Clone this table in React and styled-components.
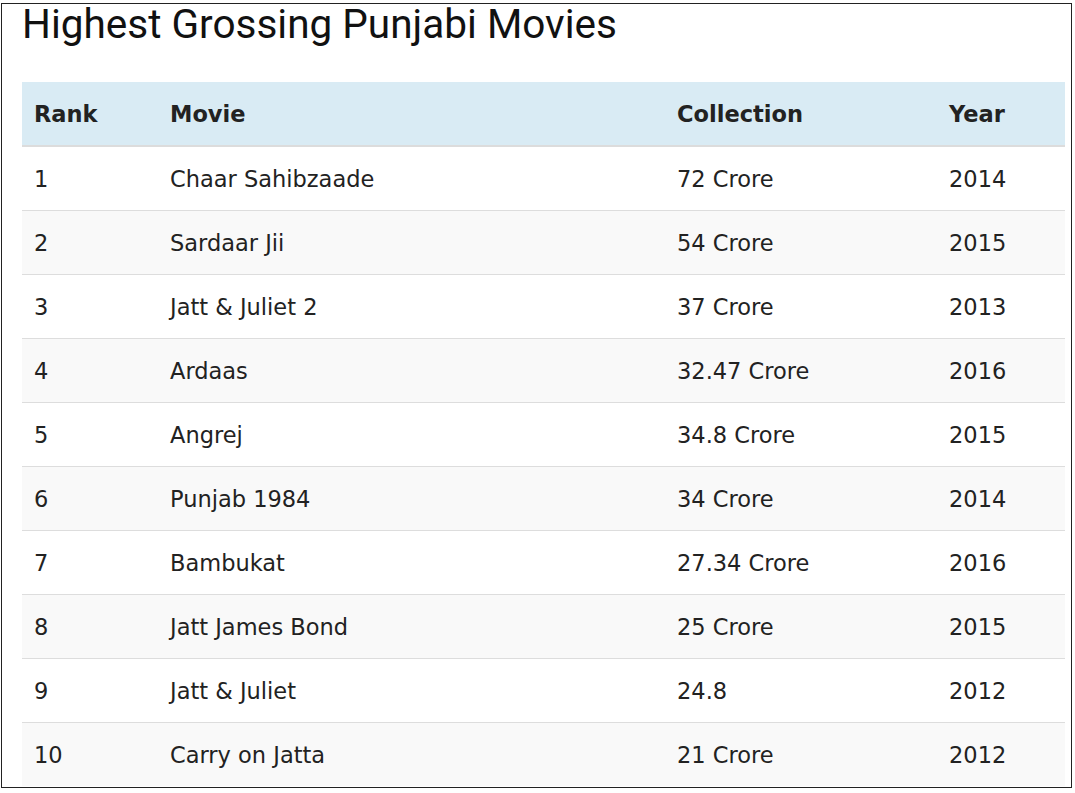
import React from "react";
import styled, { createGlobalStyle } from "styled-components";

const Global = createGlobalStyle`
  html, body { margin: 0; padding: 0; background: #fff; }
  body { font-family: "DejaVu Sans", Verdana, sans-serif; color: #222; }
`;

const Frame = styled.div`
  box-sizing: border-box;
  width: 1071px;
  height: 785px;
  margin: 3px 0 0 1px;
  border: 1px solid #222;
  padding: 0 0 0 20px;
  overflow: hidden;
`;

const Title = styled.h2`
  margin: 0;
  font-family: Roboto, "Liberation Sans", sans-serif;
  font-weight: 400;
  font-size: 40.5px;
  line-height: 40px;
  color: #111;
  height: 78px;
`;

const Table = styled.table`
  width: 1043px;
  border-collapse: collapse;
  table-layout: fixed;
  font-size: 22.5px;
  color: #222;
`;

const HeadCell = styled.th`
  box-sizing: border-box;
  width: ${(p) => p.$w}px;
  height: 64px;
  padding: 0 12px;
  text-align: left;
  font-weight: 700;
  background: #d9ebf4;
  border-bottom: 2px solid #dcdcdc;
  vertical-align: middle;
`;

const Row = styled.tr`
  background: ${(p) => (p.$odd ? "#f9f9f9" : "#fff")};
  border-top: 1px solid #ddd;
`;

const Cell = styled.td`
  height: 63px;
  padding: 0 12px;
  vertical-align: middle;
  white-space: nowrap;
`;

const cols = [
  { label: "Rank", w: 136 },
  { label: "Movie", w: 507 },
  { label: "Collection", w: 272 },
  { label: "Year", w: 128 },
];

const data = [
  ["1", "Chaar Sahibzaade", "72 Crore", "2014"],
  ["2", "Sardaar Jii", "54 Crore", "2015"],
  ["3", "Jatt & Juliet 2", "37 Crore", "2013"],
  ["4", "Ardaas", "32.47 Crore", "2016"],
  ["5", "Angrej", "34.8 Crore", "2015"],
  ["6", "Punjab 1984", "34 Crore", "2014"],
  ["7", "Bambukat", "27.34 Crore", "2016"],
  ["8", "Jatt James Bond", "25 Crore", "2015"],
  ["9", "Jatt & Juliet", "24.8", "2012"],
  ["10", "Carry on Jatta", "21 Crore", "2012"],
];

export default function App() {
  return (
    <>
      <Global />
      <Frame>
        <Title>Highest Grossing Punjabi Movies</Title>
        <Table>
          <thead>
            <tr>
              {cols.map((c) => (
                <HeadCell key={c.label} $w={c.w}>
                  {c.label}
                </HeadCell>
              ))}
            </tr>
          </thead>
          <tbody>
            {data.map((r, i) => (
              <Row key={r[0]} $odd={i % 2 === 1}>
                {r.map((v, j) => (
                  <Cell key={j}>{v}</Cell>
                ))}
              </Row>
            ))}
          </tbody>
        </Table>
      </Frame>
    </>
  );
}
